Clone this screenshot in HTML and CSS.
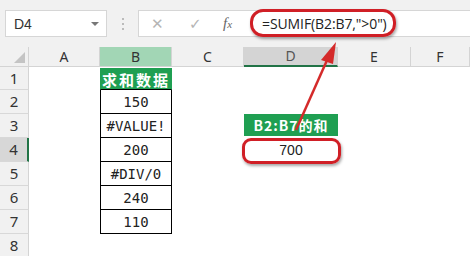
FILE: index.html
```html
<!DOCTYPE html>
<html>
<head>
<meta charset="utf-8">
<link rel="stylesheet" href="styles.css">
</head>
<body>
<div class="app">
  <div class="toolbar">
    <div class="namebox"><span class="ref">D4</span><span class="caret"></span></div>
    <div class="dots"><i></i><i></i><i></i></div>
    <div class="formula">
      <span class="ficon cancel">✕</span>
      <span class="ficon ok">✓</span>
      <span class="ficon fx"><i>f</i><small>x</small></span>
      <span class="ftext">=SUMIF(B2:B7,"&gt;0")</span>
    </div>
  </div>
  <div class="sheet">
    <div class="corner"><span class="tri"></span></div>
    <div class="ch">A</div>
    <div class="ch chb">B</div>
    <div class="ch">C</div>
    <div class="ch chd">D</div>
    <div class="ch">E</div>
    <div class="ch">F</div>

    <div class="rh">1</div><div class="c"></div><div class="c tb head">求和数据</div><div class="c"></div><div class="c"></div><div class="c"></div><div class="c"></div>
    <div class="rh">2</div><div class="c"></div><div class="c tb">150</div><div class="c"></div><div class="c"></div><div class="c"></div><div class="c"></div>
    <div class="rh">3</div><div class="c"></div><div class="c tb">#VALUE!</div><div class="c"></div><div class="c dhead">B2:B7的和</div><div class="c"></div><div class="c"></div>
    <div class="rh rsel">4</div><div class="c"></div><div class="c tb">200</div><div class="c"></div><div class="c dval">700</div><div class="c"></div><div class="c"></div>
    <div class="rh">5</div><div class="c"></div><div class="c tb">#DIV/0</div><div class="c"></div><div class="c"></div><div class="c"></div><div class="c"></div>
    <div class="rh">6</div><div class="c"></div><div class="c tb">240</div><div class="c"></div><div class="c"></div><div class="c"></div><div class="c"></div>
    <div class="rh">7</div><div class="c"></div><div class="c tb last">110</div><div class="c"></div><div class="c"></div><div class="c"></div><div class="c"></div>
    <div class="rh">8</div><div class="c"></div><div class="c"></div><div class="c"></div><div class="c"></div><div class="c"></div><div class="c"></div>
  </div>
  <div class="ring ring-formula"></div>
  <div class="ring ring-cell"></div>
  <svg class="arrow" width="470" height="256" viewBox="0 0 470 256">
    <line x1="296" y1="130" x2="328" y2="58" stroke="#d42a2a" stroke-width="2.5"/>
    <polygon points="336,42 321,60 333,64" fill="#d42a2a"/>
  </svg>
</div>
</body>
</html>
```
FILE: styles.css
```css
* { box-sizing: border-box; }
html, body { margin: 0; padding: 0; background: #fff; }
.app {
  position: relative;
  width: 470px;
  height: 256px;
  overflow: hidden;
  font-family: "Liberation Sans", "Noto Sans CJK SC", sans-serif;
}
.toolbar {
  height: 47px;
  background: #f1f1f1;
  display: flex;
  align-items: flex-start;
  padding: 10px 0 0 5px;
}
.namebox {
  width: 102px;
  height: 27px;
  background: #fff;
  border: 1px solid #d6d6d6;
  display: flex;
  align-items: center;
  justify-content: space-between;
  padding: 0 7px 0 8px;
}
.ref { font-size: 14px; color: #333; }
.caret {
  width: 0; height: 0;
  border-left: 4px solid transparent;
  border-right: 4px solid transparent;
  border-top: 4px solid #777;
}
.dots {
  width: 31px;
  height: 27px;
  display: flex;
  flex-direction: column;
  align-items: center;
  justify-content: center;
  gap: 3px;
}
.dots i { width: 2px; height: 2px; background: #bbb; display: block; }
.formula {
  flex: 1;
  height: 27px;
  background: #fff;
  border: 1px solid #d6d6d6;
  border-right: none;
  display: flex;
  align-items: center;
  padding-left: 12px;
}
.ficon { color: #b5b5b5; font-size: 15px; font-family: "DejaVu Sans", sans-serif; }
.cancel { width: 38px; }
.ok { width: 34px; }
.fx { width: 39px; color: #666; font-family: "Liberation Serif", serif; font-size: 15px; }
.fx small { font-size: 11px; font-style: italic; }
.ftext { font-family: "Open Sans", sans-serif; font-size: 14px; color: #222; letter-spacing: -0.1px; }

.sheet {
  display: grid;
  grid-template-columns: 29px 71px 72px 72px 94px 73px 59px;
  grid-template-rows: 20px 23px 24px 24px 24px 24px 24px 24px 24px;
}
.corner {
  background: #f1f1f1;
  border-right: 1px solid #d4d4d4;
  border-bottom: 1px solid #d4d4d4;
  position: relative;
}
.tri {
  position: absolute;
  right: 3px; bottom: 3px;
  width: 0; height: 0;
  border-left: 11px solid transparent;
  border-bottom: 11px solid #c4c4c4;
}
.ch {
  background: #f1f1f1;
  border-right: 1px solid #d4d4d4;
  border-bottom: 1px solid #d4d4d4;
  font-size: 14px;
  color: #333;
  display: flex;
  align-items: center;
  justify-content: center;
  font-family: "Noto Sans", sans-serif;
  line-height: 1;
}
.chb { background: #a2d6b5; }
.chd { background: #d4d4d4; border-bottom: 2px solid #217346; color: #555; }
.rh {
  background: #f1f1f1;
  border-right: 1px solid #d4d4d4;
  border-bottom: 1px solid #d8d8d8;
  font-size: 15px;
  color: #333;
  display: flex;
  align-items: center;
  justify-content: center;
  font-family: "Noto Sans", sans-serif;
  line-height: 1;
}
.rsel { background: #d7d7d7; border-right: 2px solid #217346; }
.c {
  display: flex;
  align-items: center;
  justify-content: center;
  font-family: "DejaVu Sans Mono", "Noto Sans CJK SC", monospace;
  font-size: 14px;
  color: #222;
}
.tb {
  border-left: 1px solid #000;
  border-right: 1px solid #000;
  border-bottom: 1px solid #000;
}
.head {
  background: #1f9f52;
  color: #fff;
  font-family: "Noto Sans CJK SC", sans-serif;
  font-weight: bold;
  font-size: 15px;
  letter-spacing: 2px;
  border: 1px solid #1f9f52;
  border-bottom: 1px solid #000;
  margin-top: 1px;
}
.dhead {
  background: #1f9f52;
  color: #fff;
  font-family: "Noto Sans CJK SC", sans-serif;
  font-weight: bold;
  font-size: 14px;
  letter-spacing: 1px;
  margin-bottom: 2px;
}
.dval { font-family: "Liberation Sans", sans-serif; font-size: 14px; }
.ring {
  position: absolute;
  border: 3px solid #d01f26;
  box-shadow: 1px 2px 3px rgba(0,0,0,0.35);
}
.ring-formula { left: 250px; top: 9px; width: 146px; height: 28px; border-radius: 13px; }
.ring-cell { left: 242px; top: 138px; width: 99px; height: 26px; border-radius: 9px; }
.arrow { position: absolute; left: 0; top: 0; }
```
